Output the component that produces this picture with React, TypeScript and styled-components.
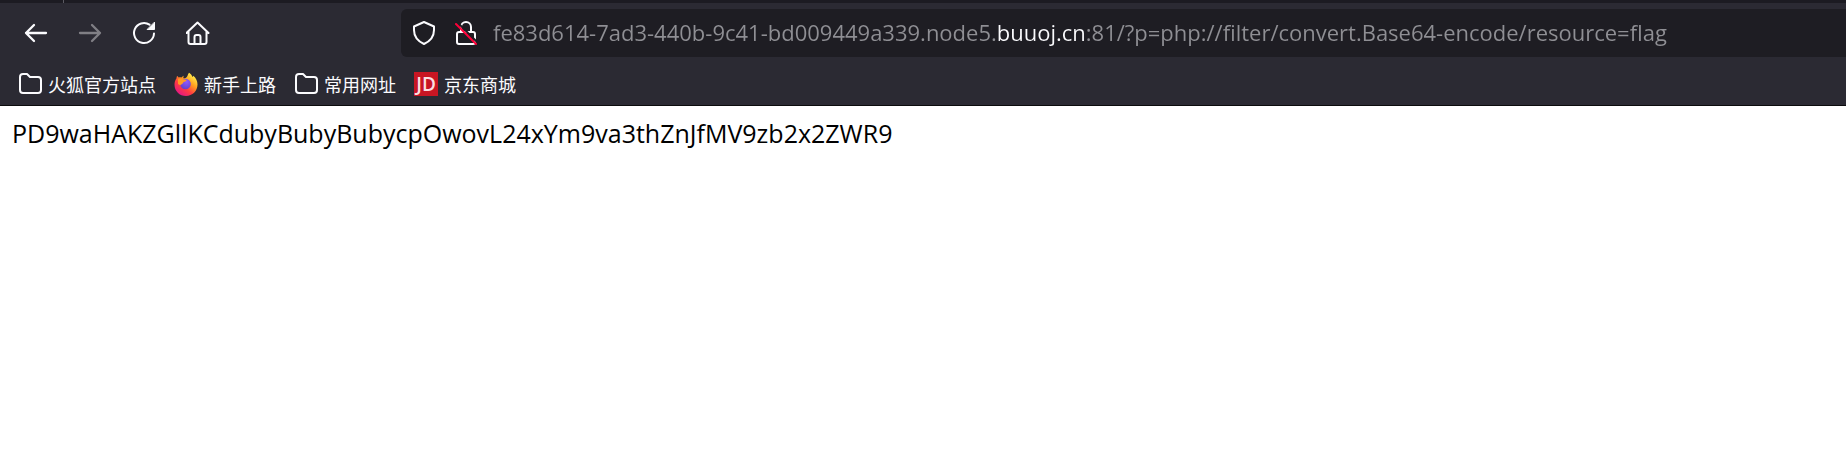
import React, { useLayoutEffect, useRef, useState } from "react";
import styled, { createGlobalStyle } from "styled-components";

const GlobalStyle = createGlobalStyle`
  * { box-sizing: border-box; }
  body {
    margin: 0;
    background: #ffffff;
    font-family: "Open Sans", "Noto Sans CJK SC", sans-serif;
  }
`;

const Chrome = styled.header`
  background: #2b2a33;
  border-bottom: 1px solid #0c0c0d;
`;

const TabStrip = styled.div`
  height: 3px;
  background: #1c1b22;
  padding-left: 63px;
`;

const TabDivider = styled.div`
  width: 1px;
  height: 3px;
  background: #5b5a62;
`;

const Toolbar = styled.div`
  display: flex;
  align-items: center;
  padding: 6px 0 6px 12px;
`;

const NavButtons = styled.nav`
  display: flex;
  flex: none;
  gap: 6px;
  width: 389px;
`;

const NavButton = styled.button`
  display: grid;
  place-items: center;
  width: 48px;
  height: 48px;
  padding: 0;
  border: 0;
  border-radius: 6px;
  background: transparent;
  color: #fbfbfe;
  &:disabled { color: #807f85; }
  &:not(:disabled):hover { background: #42414d; }
`;

const AddressBar = styled.form`
  display: flex;
  align-items: center;
  flex: 1;
  min-width: 0;
  height: 48px;
  padding-left: 2px;
  border-radius: 6px 0 0 6px;
  background: #1e1d23;
`;

const IdentityButton = styled.button`
  display: grid;
  place-items: center;
  flex: none;
  width: 42px;
  height: 42px;
  padding: 0;
  border: 0;
  background: transparent;
  color: #fbfbfe;
`;

const AddressInput = styled.input<{ $from: number; $to: number }>`
  flex: 1;
  min-width: 0;
  height: 48px;
  margin-left: 6px;
  padding: 0 0 2px;
  border: 0;
  outline: 0;
  font: 22px "Open Sans", "Noto Sans", sans-serif;
  color: #8f8f94;
  background: linear-gradient(
    90deg,
    #8f8f94 ${(p) => p.$from}px,
    #fbfbfe ${(p) => p.$from}px ${(p) => p.$to}px,
    #8f8f94 ${(p) => p.$to}px
  );
  background-clip: text;
  -webkit-text-fill-color: transparent;
`;

const Bookmarks = styled.nav`
  display: flex;
  gap: 18px;
  height: 42px;
  padding: 0 18px;
`;

const Bookmark = styled.a`
  display: flex;
  align-items: center;
  gap: 6px;
  color: #fbfbfe;
  font: 18px "Noto Sans CJK SC", sans-serif;
  text-decoration: none;
  white-space: nowrap;
`;

const Page = styled.main`
  padding: 11px 12px;
  font-size: 25px;
  line-height: 32px;
  color: #000000;
  overflow-wrap: anywhere;
`;

const Icon = styled.svg`
  display: block;
  width: 24px;
  height: 24px;
  fill: none;
  stroke: currentColor;
  stroke-width: 2;
  stroke-linecap: round;
  stroke-linejoin: round;
`;

const FolderIcon = () => (
  <Icon viewBox="0 0 24 24" aria-hidden="true">
    <path d="M2 5a3 3 0 0 1 3-3h4l3 3h8a3 3 0 0 1 3 3v10a3 3 0 0 1-3 3H5a3 3 0 0 1-3-3z" />
  </Icon>
);

const FirefoxIcon = () => (
  <Icon viewBox="0 0 24 24" aria-hidden="true">
    <defs>
      <linearGradient id="ff-body" x1="0.85" y1="0.1" x2="0.2" y2="0.95">
        <stop offset="0" stopColor="#fff44f" />
        <stop offset="0.35" stopColor="#ffa01f" />
        <stop offset="0.65" stopColor="#ff3c40" />
        <stop offset="1" stopColor="#e31587" />
      </linearGradient>
      <radialGradient id="ff-globe" cx="0.6" cy="0.3" r="0.8">
        <stop offset="0" stopColor="#9059ff" />
        <stop offset="1" stopColor="#5b3ec4" />
      </radialGradient>
    </defs>
    <g stroke="none">
      <path fill="url(#ff-body)" d="M14.7.4c2 1.200 3.200 2.600 3.800 4.600.5-.3.700-.8.800-1.300C22 6 23.500 9 23.500 12.500 23.500 19 18.400 24 12 24S.5 19 .5 12.700c0-2.600.7-4.600 2-6.500 0-.9.200-1.700.6-2.300.6.3 1 .8 1.500 1.500.9-.3 1.900-.3 2.800 0 .7-.8 1.500-1.400 2.500-1.700-.6.9-.7 1.800-.5 2.600 2 .1 3.300-.8 4-2.300.5-1.200.7-2.300 1.800-3.600z" />
      <circle cx="11.500" cy="12" r="5.300" fill="url(#ff-globe)" />
      <path fill="#ff9a24" d="M4 7c2-.8 3.500-.6 5 .2l3 .6c.8.2.6 1.100-.2 1.400l-2.400 1c-.5 1.600-1.800 1.800-3.200 3L4 12z" />
    </g>
  </Icon>
);

const JdBadge = styled.span`
  display: grid;
  place-items: center;
  width: 24px;
  height: 24px;
  background: #c81623;
  color: #fbdfe1;
  font: 600 19px/24px "Open Sans", sans-serif;
`;

const ADDRESS = {
  before: "fe83d614-7ad3-440b-9c41-bd009449a339.node5.",
  domain: "buuoj.cn",
  after: ":81/?p=php://filter/convert.Base64-encode/resource=flag",
};

function Address() {
  const ref = useRef<HTMLInputElement>(null);
  const [range, setRange] = useState({ from: 0, to: 0 });

  // The registrable domain is highlighted, so its extent in the text is measured.
  useLayoutEffect(() => {
    const context = document.createElement("canvas").getContext("2d");
    if (!ref.current || !context) return;
    context.font = getComputedStyle(ref.current).font;
    setRange({
      from: Math.round(context.measureText(ADDRESS.before).width),
      to: Math.round(context.measureText(ADDRESS.before + ADDRESS.domain).width),
    });
  }, []);

  return (
    <AddressInput
      ref={ref}
      $from={range.from}
      $to={range.to}
      aria-label="Address"
      spellCheck={false}
      defaultValue={ADDRESS.before + ADDRESS.domain + ADDRESS.after}
    />
  );
}

export default function App() {
  return (
    <>
      <GlobalStyle />
      <Chrome>
        <TabStrip><TabDivider /></TabStrip>
        <Toolbar>
          <NavButtons aria-label="Navigation">
            <NavButton type="button" aria-label="Back">
              <Icon viewBox="0 0 24 24"><path d="M22 12H2M10 4l-8 8 8 8" strokeWidth="2.300" /></Icon>
            </NavButton>
            <NavButton type="button" aria-label="Forward" disabled>
              <Icon viewBox="0 0 24 24"><path d="M2 12h20M14 4l8 8-8 8" strokeWidth="2.300" /></Icon>
            </NavButton>
            <NavButton type="button" aria-label="Reload">
              <Icon viewBox="0 0 24 24">
                <path d="M22 12.500a10 10 0 1 1-4.500-8.800" />
                <path d="M22.500 1.500v7h-7z" fill="currentColor" strokeWidth="1" />
              </Icon>
            </NavButton>
            <NavButton type="button" aria-label="Home">
              <Icon viewBox="0 0 24 24">
                <path d="M.5 12l11-10.500 11 10.500M2.500 10.500V21a2 2 0 0 0 2 2h14a2 2 0 0 0 2-2V10.500M8.500 23v-7a2 2 0 0 1 2-2h2a2 2 0 0 1 2 2v7" />
              </Icon>
            </NavButton>
          </NavButtons>
          <AddressBar onSubmit={(e) => e.preventDefault()}>
            <IdentityButton type="button" aria-label="Tracking protection">
              <Icon viewBox="0 0 24 24">
                <path d="M12 1 22 5.500V9c0 6-3.500 11-10 14C5.500 20 2 15 2 9V5.500z" />
              </Icon>
            </IdentityButton>
            <IdentityButton type="button" aria-label="Connection not secure">
              <Icon viewBox="0 0 24 24">
                <path d="M7 11V6a5 5 0 0 1 10 0v5M5 11h14a2 2 0 0 1 2 2v8a2 2 0 0 1-2 2H5a2 2 0 0 1-2-2v-8a2 2 0 0 1 2-2" />
                <path d="M4 2l20 20" stroke="#1e1d23" />
                <path d="M2 3l20 20" stroke="#ff0039" />
              </Icon>
            </IdentityButton>
            <Address />
          </AddressBar>
        </Toolbar>
        <Bookmarks aria-label="Bookmarks">
          <Bookmark href="#"><FolderIcon />火狐官方站点</Bookmark>
          <Bookmark href="#"><FirefoxIcon />新手上路</Bookmark>
          <Bookmark href="#"><FolderIcon />常用网址</Bookmark>
          <Bookmark href="#"><JdBadge>JD</JdBadge>京东商城</Bookmark>
        </Bookmarks>
      </Chrome>
      <Page>PD9waHAKZGllKCdubyBubyBubycpOwovL24xYm9va3thZnJfMV9zb2x2ZWR9</Page>
    </>
  );
}
